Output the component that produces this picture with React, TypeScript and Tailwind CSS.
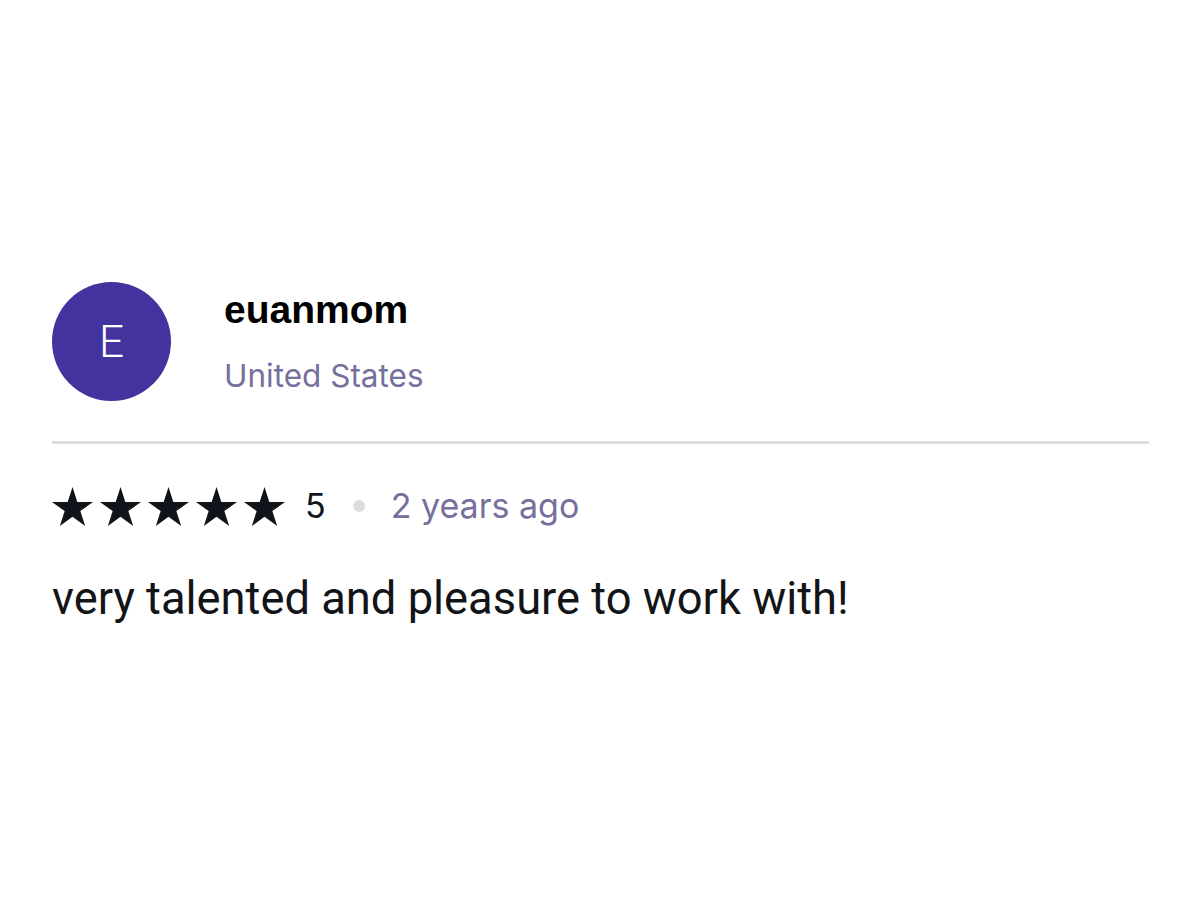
import React from "react";

function Star() {
  return (
    <svg width="41" height="39" viewBox="0 0 41 39" className="block shrink-0">
      <polygon
        fill="#10151c"
        points="20.5,0 25.34,14.89 41,14.89 28.33,24.09 33.17,38.98 20.5,29.78 7.83,38.98 12.67,24.09 0,14.89 15.66,14.89"
      />
    </svg>
  );
}

export default function App() {
  return (
    <div className="min-h-[918px] bg-white px-[52px] pt-[282px]">
      <div className="flex gap-[53px]">
        <div className="flex h-[119px] w-[119px] shrink-0 items-center justify-center rounded-full bg-[#42339e]">
          <span className="font-['Roboto',sans-serif] text-[44px] font-light leading-none text-white">E</span>
        </div>
        <div className="flex flex-col pt-[6px]">
          <span className="font-['Liberation_Sans',sans-serif] text-[39px] font-bold leading-[44px] text-black">euanmom</span>
          <span className="mt-[26px] font-['Inter',sans-serif] text-[31.5px] leading-[36px] text-[#76709c]">United States</span>
        </div>
      </div>
      <div className="mt-[40px] h-[3px] bg-[#dddcdf]" />
      <div className="mt-[42px] flex items-center">
        <div className="flex gap-[7px]">
          <Star />
          <Star />
          <Star />
          <Star />
          <Star />
        </div>
        <span className="ml-[20px] font-['Inter',sans-serif] text-[34px] leading-[40px] text-[#10151c]">5</span>
        <span className="ml-[27px] h-[12px] w-[12px] rounded-full bg-[#dddcdf]" />
        <span className="ml-[26px] font-['Inter',sans-serif] text-[34px] leading-[40px] text-[#76709c]">2 years ago</span>
      </div>
      <p className="mt-[47px] font-['Roboto',sans-serif] text-[45.3px] leading-[52px] text-[#121418]">
        very talented and pleasure to work with!
      </p>
    </div>
  );
}
